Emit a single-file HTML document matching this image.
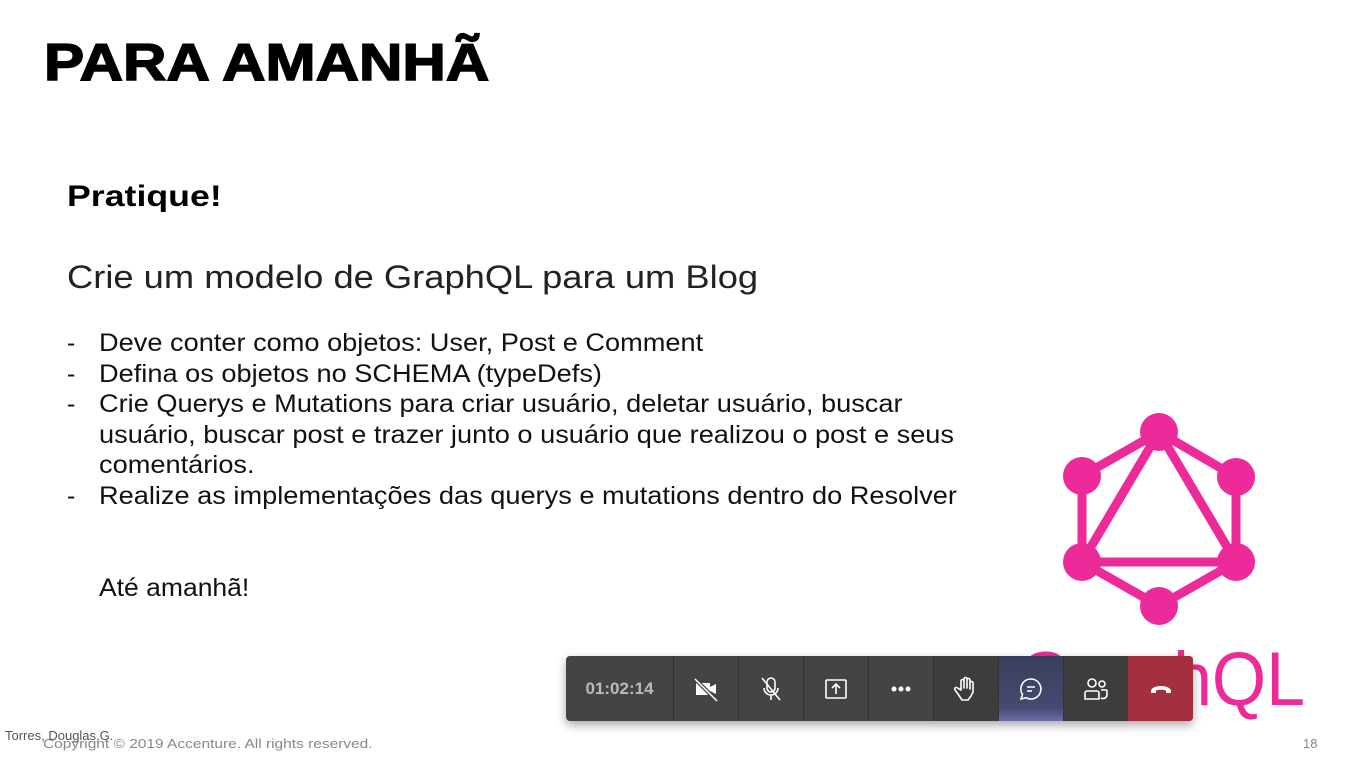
<!DOCTYPE html>
<html><head><meta charset="utf-8"><style>
*{margin:0;padding:0;box-sizing:border-box}
body{width:1359px;height:764px;background:#fff;position:relative;overflow:hidden;font-family:"Liberation Sans",sans-serif;color:#000}
.a{position:absolute;white-space:nowrap;transform-origin:0 0}
h1{position:absolute;left:44px;top:33px;font-size:52px;font-weight:900;-webkit-text-stroke:1.5px #000;transform:scaleX(1.156);transform-origin:0 0;white-space:nowrap}
.l{position:absolute;font-size:25px;color:#111;white-space:nowrap;transform:scaleX(1.087);transform-origin:0 0}
.d{position:absolute;left:67px;font-size:25px;color:#111}
.tb{position:absolute;left:566px;top:656px;width:627px;height:65px;background:#444;border-radius:4px;box-shadow:0 4px 10px rgba(0,0,0,.35);display:flex;overflow:hidden}
.tb div{height:65px;display:flex;align-items:center;justify-content:center;border-left:1px solid #333}
.tb svg{width:32px;height:32px}
</style></head><body>
<h1>PARA AMANHÃ</h1>
<div class="a" style="left:67px;top:180px;font-size:30px;font-weight:bold;transform:scaleX(1.19)">Pratique!</div>
<div class="a" style="left:67px;top:259px;font-size:32px;color:#222;transform:scaleX(1.135)">Crie um modelo de GraphQL para um Blog</div>
<div class="d" style="top:329px">-</div><div class="l" style="left:99px;top:329px">Deve conter como objetos: User, Post e Comment</div>
<div class="d" style="top:360px">-</div><div class="l" style="left:99px;top:360px">Defina os objetos no SCHEMA (typeDefs)</div>
<div class="d" style="top:390px">-</div><div class="l" style="left:99px;top:390px">Crie Querys e Mutations para criar usuário, deletar usuário, buscar</div>
<div class="l" style="left:99px;top:421px">usuário, buscar post e trazer junto o usuário que realizou o post e seus</div>
<div class="l" style="left:99px;top:451px">comentários.</div>
<div class="d" style="top:482px">-</div><div class="l" style="left:99px;top:482px">Realize as implementações das querys e mutations dentro do Resolver</div>
<div class="l" style="left:99px;top:574px;transform:scaleX(1.06)">Até amanhã!</div>
<svg class="a" style="left:0;top:0" width="1359" height="764">
<g stroke="#ec2a9a" stroke-width="9" fill="none" stroke-linejoin="round">
<polygon points="1159,432 1236,477 1236,562 1159,606 1082,562 1082,476"/>
<polygon points="1159,432 1236,562 1082,562"/>
</g>
<g fill="#ec2a9a">
<circle cx="1159" cy="432" r="19"/><circle cx="1236" cy="477" r="19"/><circle cx="1236" cy="562" r="19"/>
<circle cx="1159" cy="606" r="19"/><circle cx="1082" cy="562" r="19"/><circle cx="1082" cy="476" r="19"/>
</g>
<text x="1018" y="705" font-family="Liberation Sans" font-size="76" fill="#ec2a9a" textLength="287" lengthAdjust="spacingAndGlyphs">GraphQL</text>
</svg>
<div class="a" style="left:43px;top:736px;font-size:13px;color:#888;transform:scaleX(1.19)">Copyright © 2019 Accenture. All rights reserved.</div>
<div class="a" style="left:5px;top:728px;font-size:13px;color:#555">Torres, Douglas G.</div>
<div class="a" style="left:1303px;top:736px;font-size:13px;color:#888">18</div>
<div class="tb">
<div style="width:107px;border:none;color:#bbb;font-size:17px;font-weight:bold">01:02:14</div>
<div style="width:65px"><svg viewBox="0 0 32 32"><path d="M6 10h14v12H6z M20 14l6-3v10l-6-3z" fill="#fff"/><path d="M5 6l22 22" stroke="#444" stroke-width="4"/><path d="M5 6l22 22" stroke="#fff" stroke-width="1.5"/></svg></div>
<div style="width:65px"><svg viewBox="0 0 32 32" fill="none" stroke="#fff" stroke-width="1.6"><rect x="12" y="5" width="8" height="14" rx="4"/><path d="M9 15a7 7 0 0 0 14 0M16 22v5M7 5l18 22"/></svg></div>
<div style="width:65px"><svg viewBox="0 0 32 32" fill="none" stroke="#fff" stroke-width="1.6"><rect x="6" y="7" width="20" height="18" rx="1"/><path d="M16 21V11M12 15l4-4 4 4"/></svg></div>
<div style="width:65px"><svg viewBox="0 0 32 32" fill="#fff"><circle cx="9" cy="16" r="2.5"/><circle cx="16" cy="16" r="2.5"/><circle cx="23" cy="16" r="2.5"/></svg></div>
<div style="width:65px;background:#3d3d3d"><svg viewBox="0 0 32 32" fill="none" stroke="#fff" stroke-width="1.6" stroke-linejoin="round"><path d="M11 17V8a1.5 1.5 0 0 1 3 0v7V6a1.5 1.5 0 0 1 3 0v9V7a1.5 1.5 0 0 1 3 0v9V10a1.5 1.5 0 0 1 3 0v9l-2 4-3 4h-6l-4-6-3-4a1.5 1.5 0 0 1 2.5-2z"/></svg></div>
<div style="width:65px;background:linear-gradient(#3a3d5a,#464a72 80%,#6a6fa8)"><svg viewBox="0 0 32 32" fill="none" stroke="#fff" stroke-width="1.6"><path d="M16 6a10 10 0 1 1-5 18.7L6 26l1.5-4.5A10 10 0 0 1 16 6z"/><path d="M12 14h8M12 18h5"/></svg></div>
<div style="width:65px;background:#3d3d3d"><svg viewBox="0 0 32 32" fill="none" stroke="#fff" stroke-width="1.6"><circle cx="12" cy="10" r="4"/><circle cx="22" cy="11" r="3"/><path d="M5 26v-6a2 2 0 0 1 2-2h10a2 2 0 0 1 2 2v6zM21 17h5a1 1 0 0 1 1 1v4a4 4 0 0 1-6 3"/></svg></div>
<div style="width:65px;background:#a4303f;border:none"><svg viewBox="0 0 32 32" fill="#fff"><path d="M6 18c0-3 5-5 10-5s10 2 10 5v2h-5v-2.5c-3-1-7-1-10 0V20H6z"/></svg></div>
</div>
</body></html>
